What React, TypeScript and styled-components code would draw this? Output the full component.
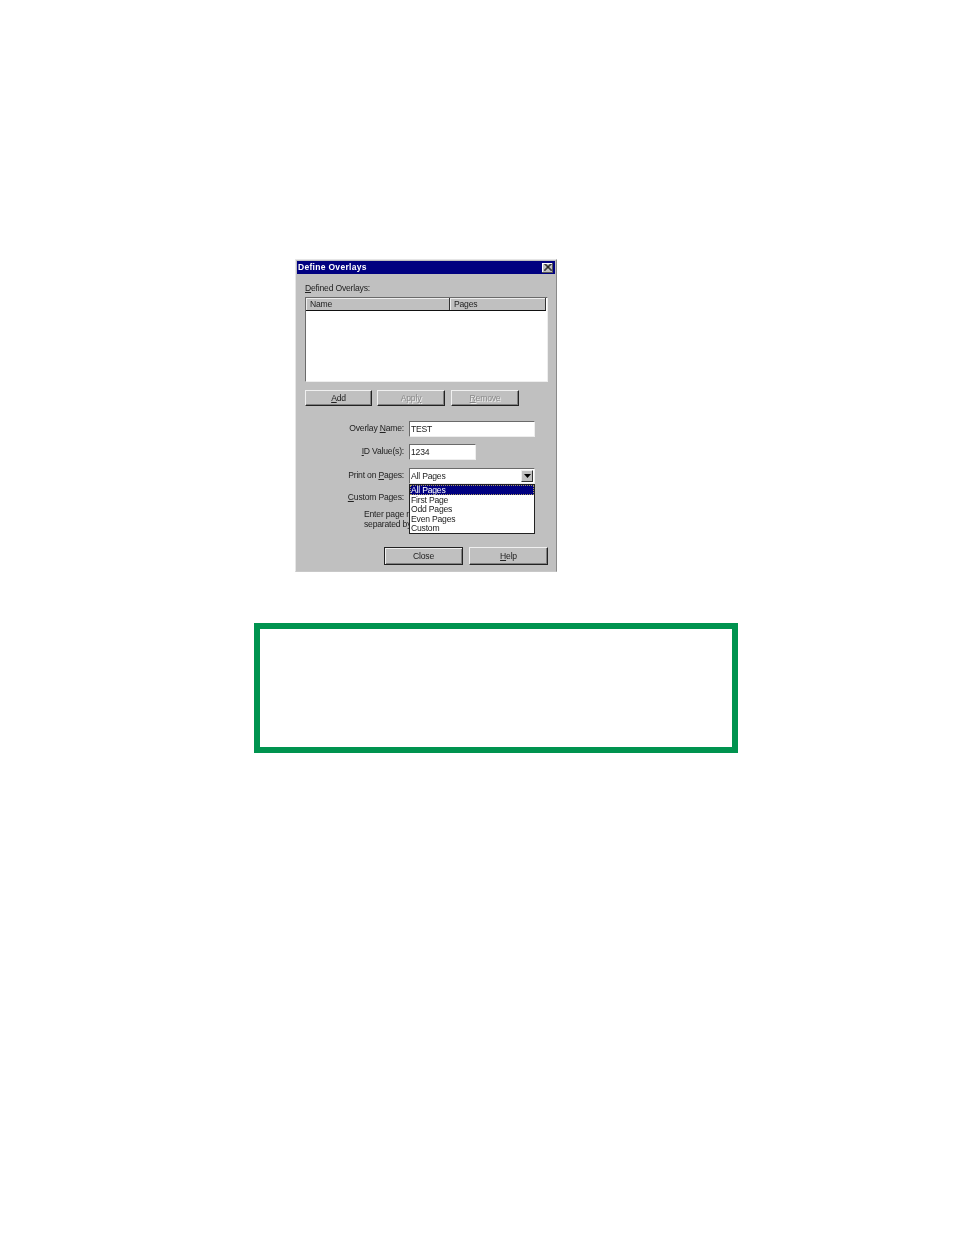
import { ReactNode } from 'react'
import styled, { createGlobalStyle } from 'styled-components'

const Global = createGlobalStyle`
html, body {
  margin: 0;
  padding: 0;
  background: #fff;
}
`

const options = ['All Pages', 'First Page', 'Odd Pages', 'Even Pages', 'Custom']

function Field({ label, children, top }: { label: ReactNode; children: ReactNode; top: number }) {
  return (
    <Row $top={top}>
      <Label>{label}</Label>
      {children}
    </Row>
  )
}

export default function App() {
  return (
    <Page>
      <Global />
      <Dialog>
        <TitleBar>
          <span>Define Overlays</span>
          <CloseBox>
            <svg width="8" height="7" viewBox="0 0 8 7">
              <path d="M0.5 0 L7.5 7 M7.5 0 L0.5 7 M1.5 0 L8 6.5 M6.5 0 L0 6.5" stroke="#111" strokeWidth="1" />
            </svg>
          </CloseBox>
        </TitleBar>
        <Body>
          <Caption><u>D</u>efined Overlays:</Caption>
          <ListBox>
            <ListHeader>
              <NameCol>Name</NameCol>
              <PagesCol>Pages</PagesCol>
            </ListHeader>
          </ListBox>
          <ButtonRow>
            <Button $w={67}><u>A</u>dd</Button>
            <Button $w={68} $disabled>Appl<u>y</u></Button>
            <Button $w={68} $disabled><u>R</u>emove</Button>
          </ButtonRow>
          <Field top={15} label={<>Overlay <u>N</u>ame:</>}>
            <TextBox $w={126}>TEST</TextBox>
          </Field>
          <Field top={7} label={<><u>I</u>D Value(s):</>}>
            <TextBox $w={67}>1234</TextBox>
          </Field>
          <Field top={8} label={<>Print on <u>P</u>ages:</>}>
            <ComboWrap>
              <TextBox $w={126}>
                All Pages
                <ComboArrow>
                  <svg width="7" height="4" viewBox="0 0 7 4">
                    <path d="M0 0 H7 L3.5 4 Z" fill="#000" />
                  </svg>
                </ComboArrow>
              </TextBox>
              <DropList>
                {options.map((o, i) => (
                  <DropItem key={o} $selected={i === 0}>{o}</DropItem>
                ))}
              </DropList>
            </ComboWrap>
          </Field>
          <Field top={6} label={<><u>C</u>ustom Pages:</>}>
            <span />
          </Field>
          <Hint>
            Enter page n<br />separated by
          </Hint>
          <FooterRow>
            <Button $w={79} $h={18} $strong>Close</Button>
            <Button $w={79} $h={18}><u>H</u>elp</Button>
          </FooterRow>
        </Body>
      </Dialog>
      <NoteBox />
    </Page>
  )
}

const Page = styled.div`
width: 954px;
height: 1235px;
padding: 259px 0 0 254px;
box-sizing: border-box;
overflow: hidden;
font-family: "Liberation Sans", Arial, sans-serif;
`
const Dialog = styled.div`
width: 262px;
height: 313px;
margin-left: 41px;
box-sizing: border-box;
padding: 1px;
background: #c0c0c0;
border-top: 1px solid #e6e6e6;
border-left: 1px solid #e6e6e6;
border-right: 1px solid #8a8a8a;
border-bottom: 1px solid #c8c8c8;
filter: blur(0.3px);
`
const TitleBar = styled.div`
height: 13px;
background: #000080;
color: #fff;
font-size: 8.5px;
font-weight: bold;
letter-spacing: 0.3px;
line-height: 13px;
padding: 0 2px 0 1px;
display: flex;
align-items: center;
justify-content: space-between;
`
const CloseBox = styled.div`
width: 11px;
height: 10px;
background: #c0c0c0;
box-shadow: inset -1px -1px 0 #555, inset 1px 1px 0 #fff;
display: flex;
align-items: center;
justify-content: center;
`
const Body = styled.div`
padding: 9px 7px 0 8px;
color: #222;
font-size: 8.6px;
letter-spacing: -0.2px;
`
const Caption = styled.div`
height: 11px;
line-height: 11px;
`
const ListBox = styled.div`
width: 243px;
height: 85px;
margin-top: 3px;
box-sizing: border-box;
background: #fff;
border-top: 1px solid #6a6a6a;
border-left: 1px solid #6a6a6a;
border-right: 1px solid #eee;
border-bottom: 1px solid #eee;
padding: 0 1px 0 0;
`
const ListHeader = styled.div`
display: flex;
height: 12px;
background: #c0c0c0;
border-bottom: 1px solid #111;
`
const NameCol = styled.div`
width: 144px;
padding-left: 4px;
box-sizing: border-box;
line-height: 12px;
border-right: 1px solid #333;
box-shadow: inset 1px 1px 0 #eee;
`
const PagesCol = styled.div`
flex: 1;
padding-left: 4px;
line-height: 12px;
border-right: 1px solid #333;
box-shadow: inset 1px 1px 0 #eee;
`
const ButtonRow = styled.div`
display: flex;
gap: 5px;
margin-top: 8px;
& > :last-child {
  margin-left: 1px;
}
`
const Button = styled.div<{ $w: number; $h?: number; $disabled?: boolean; $strong?: boolean }>`
width: ${p => p.$w}px;
height: ${p => p.$h ?? 16}px;
box-sizing: border-box;
display: flex;
align-items: center;
justify-content: center;
padding-bottom: 1px;
white-space: pre;
background: #c0c0c0;
border-top: 1px solid ${p => (p.$strong ? '#222' : '#f0f0f0')};
border-left: 1px solid ${p => (p.$strong ? '#222' : '#f0f0f0')};
border-right: 1px solid #222;
border-bottom: 1px solid #222;
box-shadow: ${p => (p.$strong ? 'inset 1px 1px 0 #f0f0f0, ' : '')}inset -1px -1px 0 #808080;
color: ${p => (p.$disabled ? '#8a8a8a' : '#222')};
text-shadow: ${p => (p.$disabled ? '1px 1px 0 #eee' : 'none')};
`
const Row = styled.div<{ $top: number }>`
display: flex;
align-items: flex-start;
gap: 5px;
margin-top: ${p => p.$top}px;
`
const Label = styled.div`
width: 99px;
flex: none;
text-align: right;
white-space: nowrap;
line-height: 14px;
`
const TextBox = styled.div<{ $w: number }>`
position: relative;
width: ${p => p.$w}px;
height: 16px;
box-sizing: border-box;
background: #fff;
border-top: 1px solid #6a6a6a;
border-left: 1px solid #6a6a6a;
border-right: 1px solid #eee;
border-bottom: 1px solid #eee;
padding-left: 1px;
line-height: 14px;
color: #222;
`
const ComboWrap = styled.div`
position: relative;
`
const ComboArrow = styled.div`
position: absolute;
right: 1px;
top: 1px;
width: 12px;
height: 12px;
box-sizing: border-box;
background: #c0c0c0;
border-top: 1px solid #eee;
border-left: 1px solid #eee;
border-right: 1px solid #333;
border-bottom: 1px solid #333;
display: flex;
align-items: center;
justify-content: center;
`
const DropList = styled.div`
position: absolute;
left: 0;
top: 16px;
width: 126px;
height: 50px;
box-sizing: border-box;
background: #fff;
border: 1px solid #222;
z-index: 2;
`
const DropItem = styled.div<{ $selected?: boolean }>`
height: 9.6px;
line-height: 11px;
padding-left: 1px;
color: ${p => (p.$selected ? '#fff' : '#222')};
background: ${p => (p.$selected ? '#000080' : 'transparent')};
${p => p.$selected && 'outline: 1px dotted #a89c60; outline-offset: -1px;'}
`
const Hint = styled.div`
margin: 5px 0 0 59px;
line-height: 10px;
height: 20px;
white-space: nowrap;
`
const FooterRow = styled.div`
display: flex;
justify-content: flex-end;
gap: 6px;
margin-top: 18px;
`
const NoteBox = styled.div`
width: 484px;
height: 130px;
margin-top: 51px;
box-sizing: border-box;
border: 6px solid #00934f;
background: #fff;
`
